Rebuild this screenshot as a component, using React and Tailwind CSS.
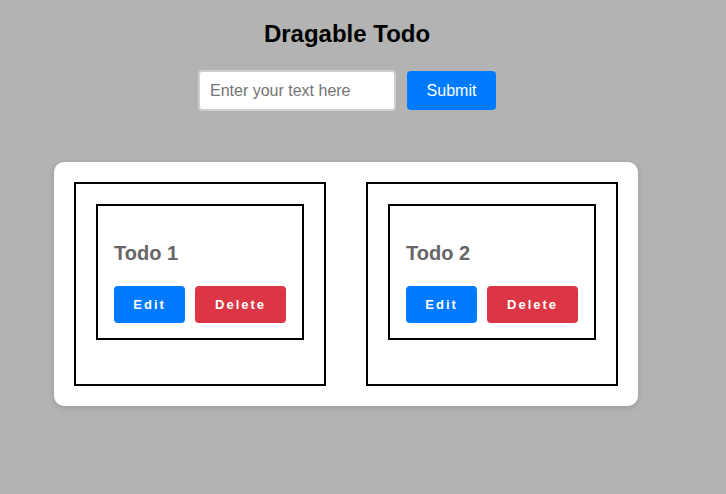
import { useState } from 'react'

const todos = [
  { id: 1, title: 'Todo 1' },
  { id: 2, title: 'Todo 2' },
]

function TodoCard({ todo }) {
  return (
    <div className="h-[204px] border-2 border-black p-[20px]">
      <div className="border-2 border-black px-4 pt-4 pb-[15px]">
        <h3 className="mt-[19px] text-[20px] leading-6 font-bold text-[#666]">{todo.title}</h3>
        <div className="mt-[21px] flex gap-[10px]">
          <button className="h-[37px] w-[72px] rounded-[4px] bg-[#007bff] text-[13px] font-bold tracking-[2px] text-white">
            Edit
          </button>
          <button className="h-[37px] w-[92px] rounded-[4px] bg-[#dc3545] text-[13px] font-bold tracking-[2px] text-white">
            Delete
          </button>
        </div>
      </div>
    </div>
  )
}

export default function App() {
  const [text, setText] = useState('')

  return (
    <div className="min-h-[494px] bg-[#b3b3b3] font-['Liberation_Sans',Arial,sans-serif]">
      <div className="w-[694px] pt-[20px]">
        <h1 className="text-center text-[24px] leading-[28px] font-bold text-black">Dragable Todo</h1>
        <div className="mt-[22px] flex justify-center gap-[11px]">
          <input
            value={text}
            onChange={(e) => setText(e.target.value)}
            placeholder="Enter your text here"
            className="h-[41px] w-[198px] rounded-[4px] border-2 border-[#cfcfcf] bg-white px-[10px] text-[16px] text-black outline-none placeholder:text-[#757575]"
          />
          <button className="mt-px h-[39px] w-[89px] rounded-[4px] bg-[#007bff] text-[16px] text-white">
            Submit
          </button>
        </div>
        <div className="mt-[51px] ml-[54px] grid w-[584px] grid-cols-2 gap-[40px] rounded-[10px] bg-white p-[20px] shadow-[0_2px_6px_rgba(0,0,0,0.15)]">
          {todos.map((t) => (
            <TodoCard key={t.id} todo={t} />
          ))}
        </div>
      </div>
    </div>
  )
}
